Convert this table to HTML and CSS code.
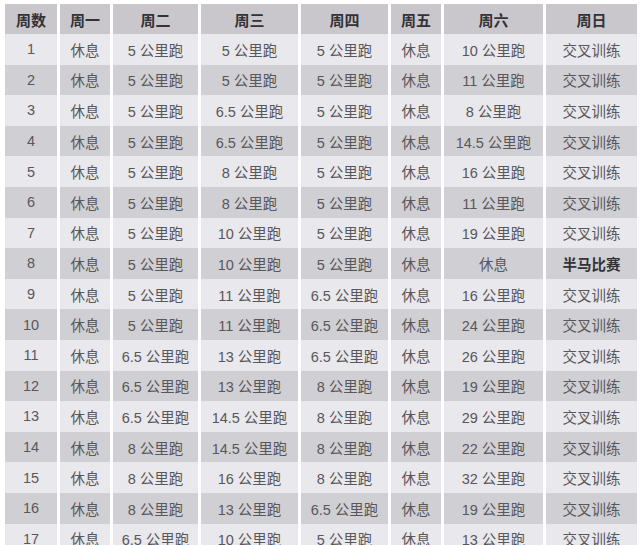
FILE: index.html
```html
<!DOCTYPE html>
<html lang="zh-CN">
<head>
<meta charset="utf-8">
<title>半马训练计划</title>
<link rel="stylesheet" href="styles.css">
</head>
<body>
<table class="plan">
<colgroup>
<col class="c-week"><col class="c-mon"><col class="c-tue"><col class="c-wed"><col class="c-thu"><col class="c-fri"><col class="c-sat"><col class="c-sun">
</colgroup>
<thead>
<tr><th>周数</th><th>周一</th><th>周二</th><th>周三</th><th>周四</th><th>周五</th><th>周六</th><th>周日</th></tr>
</thead>
<tbody>
<tr><td>1</td><td>休息</td><td>5 公里跑</td><td>5 公里跑</td><td>5 公里跑</td><td>休息</td><td>10 公里跑</td><td>交叉训练</td></tr>
<tr><td>2</td><td>休息</td><td>5 公里跑</td><td>5 公里跑</td><td>5 公里跑</td><td>休息</td><td>11 公里跑</td><td>交叉训练</td></tr>
<tr><td>3</td><td>休息</td><td>5 公里跑</td><td>6.5 公里跑</td><td>5 公里跑</td><td>休息</td><td>8 公里跑</td><td>交叉训练</td></tr>
<tr><td>4</td><td>休息</td><td>5 公里跑</td><td>6.5 公里跑</td><td>5 公里跑</td><td>休息</td><td>14.5 公里跑</td><td>交叉训练</td></tr>
<tr><td>5</td><td>休息</td><td>5 公里跑</td><td>8 公里跑</td><td>5 公里跑</td><td>休息</td><td>16 公里跑</td><td>交叉训练</td></tr>
<tr><td>6</td><td>休息</td><td>5 公里跑</td><td>8 公里跑</td><td>5 公里跑</td><td>休息</td><td>11 公里跑</td><td>交叉训练</td></tr>
<tr><td>7</td><td>休息</td><td>5 公里跑</td><td>10 公里跑</td><td>5 公里跑</td><td>休息</td><td>19 公里跑</td><td>交叉训练</td></tr>
<tr><td>8</td><td>休息</td><td>5 公里跑</td><td>10 公里跑</td><td>5 公里跑</td><td>休息</td><td>休息</td><td class="race">半马比赛</td></tr>
<tr><td>9</td><td>休息</td><td>5 公里跑</td><td>11 公里跑</td><td>6.5 公里跑</td><td>休息</td><td>16 公里跑</td><td>交叉训练</td></tr>
<tr><td>10</td><td>休息</td><td>5 公里跑</td><td>11 公里跑</td><td>6.5 公里跑</td><td>休息</td><td>24 公里跑</td><td>交叉训练</td></tr>
<tr><td>11</td><td>休息</td><td>6.5 公里跑</td><td>13 公里跑</td><td>6.5 公里跑</td><td>休息</td><td>26 公里跑</td><td>交叉训练</td></tr>
<tr><td>12</td><td>休息</td><td>6.5 公里跑</td><td>13 公里跑</td><td>8 公里跑</td><td>休息</td><td>19 公里跑</td><td>交叉训练</td></tr>
<tr><td>13</td><td>休息</td><td>6.5 公里跑</td><td>14.5 公里跑</td><td>8 公里跑</td><td>休息</td><td>29 公里跑</td><td>交叉训练</td></tr>
<tr><td>14</td><td>休息</td><td>8 公里跑</td><td>14.5 公里跑</td><td>8 公里跑</td><td>休息</td><td>22 公里跑</td><td>交叉训练</td></tr>
<tr><td>15</td><td>休息</td><td>8 公里跑</td><td>16 公里跑</td><td>8 公里跑</td><td>休息</td><td>32 公里跑</td><td>交叉训练</td></tr>
<tr><td>16</td><td>休息</td><td>8 公里跑</td><td>13 公里跑</td><td>6.5 公里跑</td><td>休息</td><td>19 公里跑</td><td>交叉训练</td></tr>
<tr><td>17</td><td>休息</td><td>6.5 公里跑</td><td>10 公里跑</td><td>5 公里跑</td><td>休息</td><td>13 公里跑</td><td>交叉训练</td></tr>
</tbody>
</table>
</body>
</html>
```
FILE: styles.css
```css
html, body {
  margin: 0;
  padding: 0;
  background: #ffffff;
}
body {
  padding: 4px 0 0 2px;
  font-family: "Liberation Sans", "Noto Sans CJK SC", sans-serif;
  overflow: hidden;
}
.plan {
  border-collapse: separate;
  border-spacing: 3px 0;
  table-layout: fixed;
  width: 638px;
}
.c-week { width: 52px; }
.c-mon { width: 50px; }
.c-tue { width: 85px; }
.c-wed { width: 97px; }
.c-thu { width: 87px; }
.c-fri { width: 50px; }
.c-sat { width: 99px; }
.c-sun { width: 91px; }
.plan th,
.plan td {
  padding: 0;
  text-align: center;
  white-space: nowrap;
  overflow: hidden;
}
.plan th {
  height: 30px;
  background: #c9c7cc;
  color: #333236;
  font-size: 15px;
  font-weight: bold;
}
.plan td {
  height: 30.6px;
  font-size: 14.5px;
  color: #58575b;
}
.plan tbody tr:nth-child(odd) td {
  background: #e9e8ec;
}
.plan tbody tr:nth-child(even) td {
  background: #d0cfd3;
}
.plan td.race {
  font-weight: bold;
  color: #333236;
}
```
